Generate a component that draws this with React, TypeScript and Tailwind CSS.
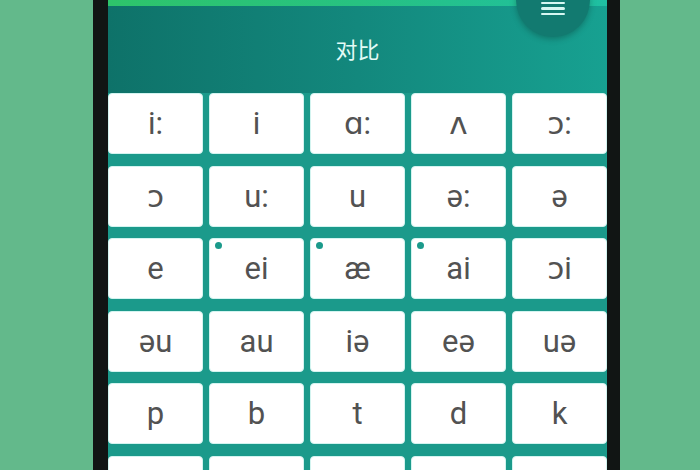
import React from "react";

///////////////////////////////////////////////////////////////////////////////
///////// Phonetic symbol board inside a phone frame //////////////////////////
///////////////////////////////////////////////////////////////////////////////

type Key = { label: string; dot?: boolean };

const keys: Key[] = [
  { label: "i:" },
  { label: "i" },
  { label: "ɑ:" },
  { label: "ʌ" },
  { label: "ɔ:" },
  { label: "ɔ" },
  { label: "u:" },
  { label: "u" },
  { label: "ə:" },
  { label: "ə" },
  { label: "e" },
  { label: "ei", dot: true },
  { label: "æ", dot: true },
  { label: "ai", dot: true },
  { label: "ɔi" },
  { label: "əu" },
  { label: "au" },
  { label: "iə" },
  { label: "eə" },
  { label: "uə" },
  { label: "p" },
  { label: "b" },
  { label: "t" },
  { label: "d" },
  { label: "k" },
];

// next row only peeks in at the bottom edge of the screen
const peekRow = ["r1", "r2", "r3", "r4", "r5"];

function MenuFab() {
  return (
    <div className="absolute left-[408px] top-[-37px] flex h-[74px] w-[74px] items-end justify-center rounded-full bg-[#127a70] pb-[22px] shadow-[0_2px_6px_rgba(0,0,0,0.25)]">
      <div className="flex flex-col gap-[3px]">
        <span className="block h-[2.5px] w-[24px] rounded bg-[#d6f7f2]" />
        <span className="block h-[2.5px] w-[24px] rounded bg-[#d6f7f2]" />
        <span className="block h-[2.5px] w-[24px] rounded bg-[#d6f7f2]" />
      </div>
    </div>
  );
}

export default function App() {
  return (
    <div className="h-[470px] w-[700px] overflow-hidden bg-[#63b98b] pl-[93px]">
      <div className="flex h-full w-[527px] border-l-[15px] border-r-[13px] border-[#111514] bg-[#111514]">
        <div className="relative flex w-[499px] flex-col overflow-hidden bg-gradient-to-r from-[#0e7269] via-[#13887d] to-[#17a191]">
          {/* status strip */}
          <div className="h-[6px] shrink-0 bg-gradient-to-r from-[#2ec46a] via-[#27c281] to-[#1fbfa2]" />

          {/* title bar */}
          <div className="flex h-[87px] shrink-0 items-center justify-center pb-[2px]">
            <span
              className="text-[22px] text-[#e3fbf6]"
              style={{ fontFamily: '"Noto Sans CJK SC", "Noto Sans", sans-serif' }}
            >
              对比
            </span>
          </div>
          <MenuFab />

          {/* key grid */}
          <div className="grid shrink-0 grid-cols-5 gap-x-[6px] gap-y-[11.5px] bg-[#1b9a8b]">
            {keys.map((k) => (
              <div
                key={k.label}
                className="relative flex h-[61px] items-center justify-center rounded-[4px] border border-[#d3f4f0] bg-white"
              >
                {k.dot && (
                  <span className="absolute left-[5px] top-[3px] h-[7px] w-[7px] rounded-full bg-[#1b9a8b]" />
                )}
                <span
                  className="text-[31px] leading-none text-[#525252]"
                  style={{ fontFamily: "Roboto, 'DejaVu Sans', sans-serif" }}
                >
                  {k.label}
                </span>
              </div>
            ))}
            {peekRow.map((id) => (
              <div
                key={id}
                className="h-[61px] rounded-[4px] border border-[#d3f4f0] bg-white"
              />
            ))}
          </div>
        </div>
      </div>
    </div>
  );
}
